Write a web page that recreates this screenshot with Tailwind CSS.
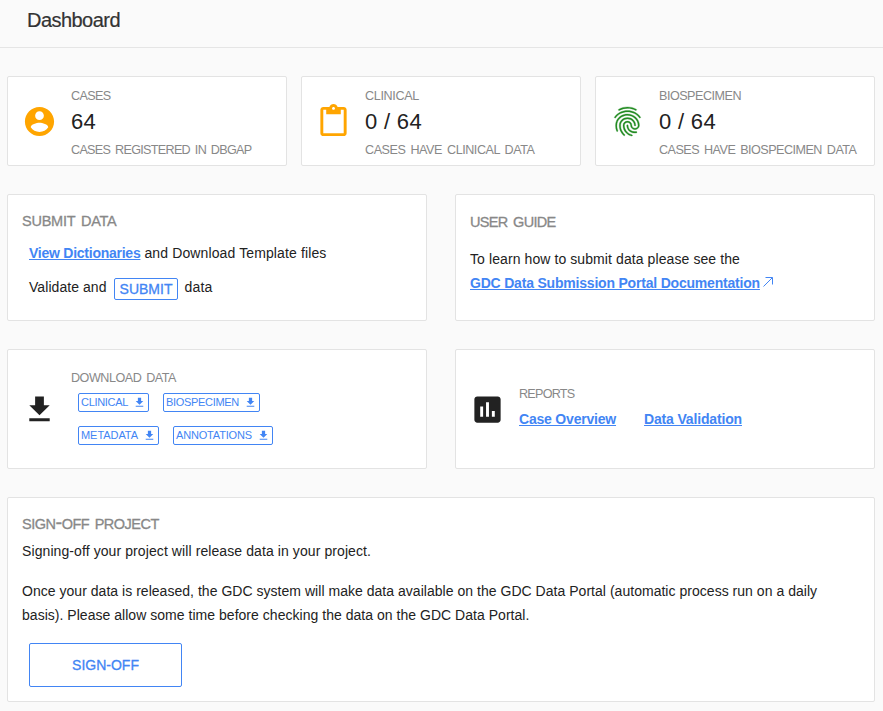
<!DOCTYPE html>
<html lang="en">
<head>
<meta charset="utf-8">
<title>Dashboard</title>
<script src="https://cdn.jsdelivr.net/npm/@tailwindcss/browser@4"></script>
</head>
<body class="[font-family:'Liberation_Sans',Arial,sans-serif] bg-[#fafafa] text-[#222] text-[14px] leading-6 w-[883px] h-[711px] overflow-hidden">
<svg class="hidden">
  <symbol id="dl" viewBox="0 0 24 24"><path d="M19 9h-4V3H9v6H5l7 7 7-7zM5 18v2h14v-2H5z"/></symbol>
</svg>
<header class="h-12 border-b border-[#e5e5e5] pl-[27px] pt-2">
  <h1 class="text-[20px] leading-[25px] tracking-[-0.54px] text-[#333] [-webkit-text-stroke:0.2px_#333]">Dashboard</h1>
</header>
<main class="pl-[7px] pr-2 pt-7 flex flex-col gap-7">
  <section class="grid grid-cols-3 gap-[14px]">
    <div class="h-[90px] bg-white border border-[#e3e3e3] rounded-xs flex pl-[14px]">
      <svg class="w-[35px] h-[35px] mt-[27px] mr-[14px] shrink-0 fill-[#ffa500]" viewBox="0 0 24 24"><path d="M12 2C6.48 2 2 6.48 2 12s4.48 10 10 10 10-4.480 10-10S17.520 2 12 2zm0 3c1.660 0 3 1.340 3 3s-1.340 3-3 3-3-1.340-3-3 1.340-3 3-3zm0 14.200c-2.500 0-4.710-1.280-6-3.220.03-1.990 4-3.080 6-3.080 1.990 0 5.970 1.090 6 3.080-1.290 1.940-3.500 3.220-6 3.220z"/></svg>
      <div class="pt-[9px] whitespace-nowrap text-[12.6px] text-[#888]">
        <div class="leading-5 tracking-[-0.64px]">CASES</div>
        <div class="leading-8 text-[22px] tracking-[0.25px] text-[#222]">64</div>
        <div class="leading-[24px] tracking-[-0.69px] [word-spacing:2px]">CASES REGISTERED IN DBGAP</div>
      </div>
    </div>
    <div class="h-[90px] bg-white border border-[#e3e3e3] rounded-xs flex pl-[14px]">
      <svg class="w-[35px] h-[35px] mt-[27px] mr-[14px] shrink-0 fill-[#ffa500] overflow-visible" viewBox="0 0 24 24"><path d="M19 2h-4.180C14.400.84 13.300 0 12 0c-1.300 0-2.400.84-2.820 2H5c-1.100 0-2 .9-2 2v16c0 1.100.9 2 2 2h14c1.100 0 2-.9 2-2V4c0-1.100-.9-2-2-2zm-7 0c.55 0 1 .45 1 1s-.45 1-1 1-1-.45-1-1 .45-1 1-1zm7 18H5V4h2v3h10V4h2v16z"/></svg>
      <div class="pt-[9px] whitespace-nowrap text-[12.6px] text-[#888]">
        <div class="leading-5 tracking-[-0.34px]">CLINICAL</div>
        <div class="leading-8 text-[22px] tracking-[0.32px] text-[#222]">0 / 64</div>
        <div class="leading-[24px] tracking-[-0.46px] [word-spacing:2px]">CASES HAVE CLINICAL DATA</div>
      </div>
    </div>
    <div class="h-[90px] bg-white border border-[#e3e3e3] rounded-xs flex pl-[14px]">
      <svg class="w-[35px] h-[35px] mt-[27px] mr-[14px] shrink-0 fill-[#228b22] stroke-[#228b22] [stroke-width:0.2]" viewBox="0 0 24 24"><path d="M17.810 4.470c-.08 0-.16-.02-.23-.06C15.660 3.420 14 3 12.010 3c-1.980 0-3.860.47-5.570 1.410-.24.13-.54.04-.68-.2-.13-.24-.04-.55.2-.68C7.820 2.520 9.860 2 12.010 2c2.130 0 3.990.47 6.030 1.520.25.13.34.43.21.67-.09.18-.26.28-.44.28zM3.500 9.720c-.1 0-.2-.03-.29-.09-.23-.16-.28-.47-.12-.7.99-1.400 2.250-2.500 3.750-3.270C9.980 4.040 14 4.030 17.150 5.650c1.500.77 2.760 1.860 3.750 3.250.16.22.11.54-.12.7-.23.16-.54.11-.7-.12-.9-1.260-2.040-2.250-3.390-2.940-2.870-1.470-6.540-1.470-9.400.01-1.360.7-2.500 1.700-3.400 2.960-.08.14-.23.21-.39.21zm6.250 12.070c-.13 0-.26-.05-.35-.15-.87-.87-1.340-1.430-2.010-2.640-.69-1.230-1.050-2.730-1.050-4.340 0-2.970 2.540-5.390 5.660-5.390s5.660 2.420 5.660 5.390c0 .28-.22.5-.5.5s-.5-.22-.5-.5c0-2.420-2.090-4.390-4.660-4.390-2.570 0-4.660 1.970-4.660 4.390 0 1.440.32 2.770.93 3.850.64 1.150 1.080 1.640 1.850 2.420.19.2.19.51 0 .71-.11.1-.24.15-.37.15zm7.170-1.850c-1.190 0-2.240-.3-3.100-.89-1.490-1.010-2.380-2.650-2.380-4.390 0-.28.22-.5.5-.5s.5.22.5.5c0 1.410.72 2.740 1.940 3.560.71.48 1.540.71 2.540.71.24 0 .64-.03 1.040-.1.27-.05.53.13.58.41.05.27-.13.53-.41.58-.57.11-1.070.12-1.210.12zM14.910 22c-.04 0-.09-.01-.13-.02-1.590-.44-2.630-1.030-3.720-2.100-1.400-1.390-2.170-3.240-2.170-5.220 0-1.620 1.380-2.940 3.080-2.940 1.700 0 3.080 1.320 3.080 2.940 0 1.070.93 1.940 2.080 1.940s2.080-.87 2.080-1.940c0-3.770-3.250-6.830-7.250-6.830-2.840 0-5.440 1.580-6.610 4.030-.39.81-.59 1.760-.59 2.800 0 .78.07 2.010.67 3.610.1.26-.03.55-.29.64-.26.1-.55-.04-.64-.29-.49-1.310-.73-2.610-.73-3.960 0-1.200.23-2.290.68-3.240 1.330-2.790 4.280-4.600 7.510-4.600 4.550 0 8.250 3.510 8.250 7.830 0 1.620-1.380 2.940-3.080 2.940s-3.080-1.320-3.080-2.940c0-1.070-.93-1.940-2.080-1.940s-2.080.87-2.080 1.940c0 1.710.66 3.310 1.870 4.510.95.94 1.860 1.460 3.270 1.850.27.07.42.35.35.61-.05.23-.26.38-.47.38z"/></svg>
      <div class="pt-[9px] whitespace-nowrap text-[12.6px] text-[#888]">
        <div class="leading-5 tracking-[-0.5px]">BIOSPECIMEN</div>
        <div class="leading-8 text-[22px] tracking-[0.32px] text-[#222]">0 / 64</div>
        <div class="leading-[24px] tracking-[-0.53px] [word-spacing:2px]">CASES HAVE BIOSPECIMEN DATA</div>
      </div>
    </div>
  </section>

  <section class="grid grid-cols-2 gap-7">
    <div class="h-[127px] bg-white border border-[#e3e3e3] rounded-xs pl-[14px] pt-4">
      <h2 class="text-[14.5px] leading-5 tracking-[-0.23px] [word-spacing:2px] text-[#888] [-webkit-text-stroke:0.3px_#888]">SUBMIT DATA</h2>
      <p class="pl-[7px] mt-[10px] leading-6 tracking-[0.12px]"><a class="font-bold underline tracking-[-0.25px] underline-offset-1 decoration-1 text-[#4285f4]">View Dictionaries</a> and Download Template files</p>
      <div class="pl-[7px] mt-[13px] flex">
        <span class="leading-[18px] tracking-[0.06px]">Validate and</span>
        <button class="ml-[7px] mr-[7px] w-16 h-[22px] pl-px border border-[#4285f4] rounded-xs text-[#4285f4] leading-5 [-webkit-text-stroke:0.3px_#4285f4]">SUBMIT</button>
        <span class="leading-[18px] tracking-[0.15px]">data</span>
      </div>
    </div>
    <div class="h-[127px] bg-white border border-[#e3e3e3] rounded-xs pl-[14px] pt-[17px]">
      <h2 class="text-[14.5px] leading-5 tracking-[-0.66px] [word-spacing:2px] text-[#888] [-webkit-text-stroke:0.3px_#888]">USER GUIDE</h2>
      <p class="mt-[15px] tracking-[0.09px]">To learn how to submit data please see the</p>
      <p class="flex"><a class="font-bold underline tracking-[-0.2px] underline-offset-1 decoration-1 text-[#4285f4]">GDC Data Submission Portal Documentation</a><svg class="w-[10px] h-[10px] ml-[3px] mt-[6px] stroke-[#4285f4] fill-none" viewBox="0 0 10 10"><path d="M0.500 9.500 9.300.7M2.500.5h7v7"/></svg></p>
    </div>
  </section>

  <section class="grid grid-cols-2 gap-7">
    <div class="h-[120px] bg-white border border-[#e3e3e3] rounded-xs flex pl-[14px]">
      <svg class="w-[35px] h-[35px] mt-[42px] mr-[14px] shrink-0 fill-[#222]"><use href="#dl"/></svg>
      <div class="pt-[18px] whitespace-nowrap">
        <div class="text-[12.6px] leading-5 tracking-[-0.49px] [word-spacing:2px] text-[#888]">DOWNLOAD DATA</div>
        <div class="flex gap-[14px] pl-[7px] mt-[5px] text-[11px] leading-[17px] text-[#4285f4]">
          <button class="w-[71px] h-[19px] border border-[#4285f4] rounded-xs flex items-center justify-between pl-[2px] pr-[2px] tracking-[-0.3px]">CLINICAL<svg class="size-[13px] fill-[#4285f4]"><use href="#dl"/></svg></button>
          <button class="w-[97px] h-[19px] border border-[#4285f4] rounded-xs flex items-center justify-between pl-[2px] pr-[2px] tracking-[-0.31px]">BIOSPECIMEN<svg class="size-[13px] fill-[#4285f4]"><use href="#dl"/></svg></button>
        </div>
        <div class="flex gap-[14px] pl-[7px] mt-[14px] text-[11px] leading-[17px] text-[#4285f4]">
          <button class="w-[81px] h-[19px] border border-[#4285f4] rounded-xs flex items-center justify-between pl-[2px] pr-[2px] tracking-[-0.06px]">METADATA<svg class="size-[13px] fill-[#4285f4]"><use href="#dl"/></svg></button>
          <button class="w-[100px] h-[19px] border border-[#4285f4] rounded-xs flex items-center justify-between pl-[2px] pr-[2px] tracking-[-0.17px]">ANNOTATIONS<svg class="size-[13px] fill-[#4285f4]"><use href="#dl"/></svg></button>
        </div>
      </div>
    </div>
    <div class="h-[120px] bg-white border border-[#e3e3e3] rounded-xs flex pl-[14px]">
      <svg class="w-[35px] h-[35px] mt-[42px] mr-[14px] shrink-0 fill-[#222]" viewBox="0 0 24 24"><path d="M19 3H5c-1.100 0-2 .9-2 2v14c0 1.100.9 2 2 2h14c1.100 0 2-.9 2-2V5c0-1.100-.9-2-2-2zM9 17H7v-7h2v7zm4 0h-2V7h2v10zm4 0h-2v-4h2v4z"/></svg>
      <div class="pt-[34px] whitespace-nowrap">
        <div class="text-[12.6px] leading-5 tracking-[-0.74px] text-[#888]">REPORTS</div>
        <div class="flex gap-7 mt-[3px] font-bold text-[#4285f4]">
          <a class="underline underline-offset-1 decoration-1 tracking-[-0.2px]">Case Overview</a>
          <a class="underline underline-offset-1 decoration-1 tracking-[-0.16px]">Data Validation</a>
        </div>
      </div>
    </div>
  </section>

  <section class="h-[205px] bg-white border border-[#e3e3e3] rounded-xs pl-[14px] pt-[14px] whitespace-nowrap">
    <h2 class="h-[22px] text-[14.5px] leading-5 tracking-[-0.5px] [word-spacing:2px] text-[#888] [-webkit-text-stroke:0.3px_#888]">SIGN<span class="text-[20px] leading-none">-</span>OFF PROJECT</h2>
    <p class="mt-[5px] tracking-[0.09px]">Signing-off your project will release data in your project.</p>
    <p class="mt-4 tracking-[0.03px]">Once your data is released, the GDC system will make data available on the GDC Data Portal (automatic process run on a daily<br>basis). Please allow some time before checking the data on the GDC Data Portal.</p>
    <button class="ml-[7px] mt-4 w-[153px] h-11 block border border-[#4285f4] rounded-xs text-[#4285f4] [-webkit-text-stroke:0.3px_#4285f4]">SIGN-OFF</button>
  </section>
</main>
</body>
</html>
